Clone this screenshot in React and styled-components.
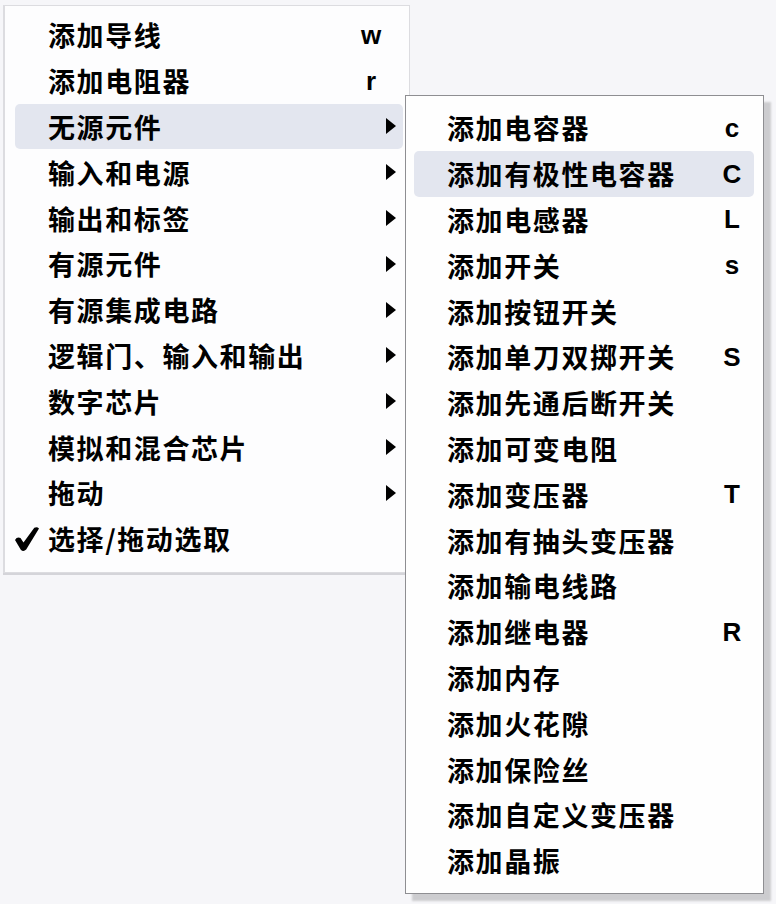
import React from 'react';
import styled, { createGlobalStyle } from 'styled-components';

const GlobalStyle = createGlobalStyle`
  html, body {
    margin: 0;
    padding: 0;
    background: #f6f6f9;
  }
  body {
    font-family: "Noto Sans CJK SC", "Liberation Sans", sans-serif;
  }
`;

const mainItems = [
  { label: '添加导线', key: 'w' },
  { label: '添加电阻器', key: 'r' },
  { label: '无源元件', sub: true, active: true },
  { label: '输入和电源', sub: true },
  { label: '输出和标签', sub: true },
  { label: '有源元件', sub: true },
  { label: '有源集成电路', sub: true },
  { label: '逻辑门、输入和输出', sub: true },
  { label: '数字芯片', sub: true },
  { label: '模拟和混合芯片', sub: true },
  { label: '拖动', sub: true },
  { label: '选择/拖动选取', checked: true },
];

const subItems = [
  { label: '添加电容器', key: 'c' },
  { label: '添加有极性电容器', key: 'C', active: true },
  { label: '添加电感器', key: 'L' },
  { label: '添加开关', key: 's' },
  { label: '添加按钮开关' },
  { label: '添加单刀双掷开关', key: 'S' },
  { label: '添加先通后断开关' },
  { label: '添加可变电阻' },
  { label: '添加变压器', key: 'T' },
  { label: '添加有抽头变压器' },
  { label: '添加输电线路' },
  { label: '添加继电器', key: 'R' },
  { label: '添加内存' },
  { label: '添加火花隙' },
  { label: '添加保险丝' },
  { label: '添加自定义变压器' },
  { label: '添加晶振' },
];

const Arrow = () => (
  <svg width="10" height="16" viewBox="0 0 10 16">
    <path d="M0 0 L10 8 L0 16 Z" fill="#000" />
  </svg>
);

const Tick = () => (
  <svg width="24" height="24" viewBox="0 0 24 24">
    <path
      d="M0 13 Q2 9.5 5.5 11 L8.5 15.5 L19.3 0.8 Q22 -0.8 24 1.6 L11.2 22.5 Q8.5 25.3 5.8 22.8 Z"
      fill="#000"
    />
  </svg>
);

const MenuItem = ({ item, withArrow }) => (
  <Row $active={item.active}>
    <Check>{item.checked && <Tick />}</Check>
    <Label>{item.label}</Label>
    <Shortcut>{item.key}</Shortcut>
    {withArrow && <ArrowCell>{item.sub && <Arrow />}</ArrowCell>}
  </Row>
);

export default function App() {
  return (
    <>
      <GlobalStyle />
      <Page>
        <MainMenu>
          {mainItems.map((it) => (
            <MenuItem key={it.label} item={it} withArrow />
          ))}
        </MainMenu>
        <SubMenu>
          {subItems.map((it) => (
            <MenuItem key={it.label} item={it} />
          ))}
        </SubMenu>
      </Page>
    </>
  );
}

const Page = styled.div`
  position: relative;
  width: 776px;
  height: 904px;
  padding: 5px 0 0 3px;
  box-sizing: border-box;
`;

const MainMenu = styled.div`
  width: 407px;
  box-sizing: border-box;
  padding: 6px 6px 10px 10px;
  background: #fdfdfe;
  border: 1px solid #dcdce0;
  border-left-width: 2px;
  box-shadow: 0 2px 0 #d4d4d9;
`;

const SubMenu = styled.div`
  position: absolute;
  left: 405px;
  top: 95px;
  width: 359px;
  height: 799px;
  box-sizing: border-box;
  padding: 9px 9px 0 8px;
  background: #fefefe;
  border: 1px solid #8e8e92;
  box-shadow: 7px 7px 2px rgba(0, 0, 0, 0.17);
`;

const Row = styled.div`
  display: flex;
  align-items: center;
  height: 45.8px;
  padding-right: 7px;
  border-radius: 5px;
  background: ${(p) => (p.$active ? '#e3e6ef' : 'transparent')};
  color: #000;
`;

const Check = styled.span`
  width: 33px;
  flex-shrink: 0;
  display: flex;
  align-items: center;
  box-sizing: border-box;
`;

const Label = styled.span`
  flex: 1;
  font-family: "Noto Sans CJK SC", sans-serif;
  font-weight: 700;
  font-size: 27px;
  letter-spacing: 1.6px;
  white-space: nowrap;
  line-height: 1;
`;

const Shortcut = styled.span`
  width: 30px;
  text-align: center;
  font-family: "Liberation Sans", Arial, sans-serif;
  font-weight: 700;
  font-size: 26px;
  line-height: 1;
`;

const ArrowCell = styled.span`
  width: 10px;
  display: flex;
  align-items: center;
`;
